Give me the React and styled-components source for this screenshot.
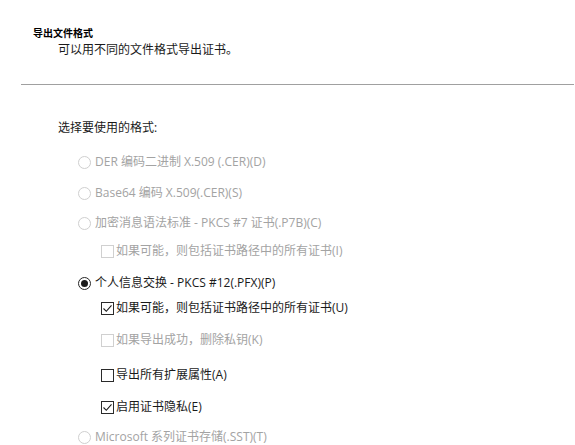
import React from "react";
import styled, { createGlobalStyle } from "styled-components";

const Global = createGlobalStyle`
  html, body { margin: 0; padding: 0; background: #fff; }
  body { font-family: "Open Sans", "Noto Sans CJK SC", "Noto Sans", sans-serif; }
`;

const Page = styled.div`
  width: 575px;
  height: 445px;
  overflow: hidden;
  background: #fff;
  display: flex;
  flex-direction: column;
`;

const Title = styled.div`
  margin: 26px 0 0 33px;
  font-family: "Noto Sans CJK SC", sans-serif;
  font-size: 10px;
  line-height: 13px;
  font-weight: 700;
  color: #000;
`;

const Subtitle = styled.div`
  margin: 3px 0 0 58px;
  font-size: 12px;
  line-height: 16px;
  color: #1a1a1a;
`;

const Divider = styled.div`
  margin: 26px 0 0 21px;
  height: 1px;
  width: 553px;
  background: #a0a0a0;
`;

const Prompt = styled.div`
  margin: 35px 0 0 58px;
  font-size: 12px;
  line-height: 16px;
  color: #1a1a1a;
`;

const Options = styled.div`
  display: flex;
  flex-direction: column;
`;

const Row = styled.div`
  display: flex;
  align-items: center;
  height: 16px;
  margin-top: ${(p) => p.$mt}px;
  margin-left: ${(p) => (p.$sub ? 101 : 78)}px;
  gap: ${(p) => (p.$sub ? 2 : 4)}px;
  font-size: 12px;
  line-height: 16px;
  white-space: nowrap;
  color: ${(p) => (p.$disabled ? "#a3a3a3" : "#1a1a1a")};
`;

const RadioCircle = styled.span`
  box-sizing: border-box;
  width: 13px;
  height: 13px;
  border-radius: 50%;
  border: 1px solid ${(p) => (p.$disabled ? "#cfcfcf" : "#262626")};
  display: flex;
  align-items: center;
  justify-content: center;
  flex: none;
  &::after {
    content: "";
    display: ${(p) => (p.$checked ? "block" : "none")};
    width: 7px;
    height: 7px;
    border-radius: 50%;
    background: #1a1a1a;
  }
`;

const Box = styled.span`
  box-sizing: border-box;
  width: 13px;
  height: 13px;
  border: 1px solid ${(p) => (p.$disabled ? "#d0d0d0" : "#2a2a2a")};
  background: #fff;
  display: flex;
  align-items: center;
  justify-content: center;
  flex: none;
`;

const Radio = ({ label, checked, disabled, mt }) => (
  <Row $mt={mt} $disabled={disabled}>
    <RadioCircle $checked={checked} $disabled={disabled} />
    <span>{label}</span>
  </Row>
);

const Check = ({ label, checked, disabled, mt }) => (
  <Row $mt={mt} $sub $disabled={disabled}>
    <Box $disabled={disabled}>
      {checked && (
        <svg width="11" height="11" viewBox="0 0 11 11">
          <polyline points="1.5,5.5 4.3,8.3 9.5,2.3" fill="none" stroke="#1a1a1a" strokeWidth="1.1" />
        </svg>
      )}
    </Box>
    <span>{label}</span>
  </Row>
);

export default function App() {
  return (
    <Page>
      <Global />
      <Title>导出文件格式</Title>
      <Subtitle>可以用不同的文件格式导出证书。</Subtitle>
      <Divider />
      <Prompt>选择要使用的格式:</Prompt>
      <Options>
        <Radio mt={18} disabled label="DER 编码二进制 X.509 (.CER)(D)" />
        <Radio mt={15} disabled label="Base64 编码 X.509(.CER)(S)" />
        <Radio mt={14} disabled label="加密消息语法标准 - PKCS #7 证书(.P7B)(C)" />
        <Check mt={12} disabled label="如果可能，则包括证书路径中的所有证书(I)" />
        <Radio mt={16} checked label="个人信息交换 - PKCS #12(.PFX)(P)" />
        <Check mt={9} checked label="如果可能，则包括证书路径中的所有证书(U)" />
        <Check mt={16} disabled label="如果导出成功，删除私钥(K)" />
        <Check mt={19} label="导出所有扩展属性(A)" />
        <Check mt={16} checked label="启用证书隐私(E)" />
        <Radio mt={14} disabled label="Microsoft 系列证书存储(.SST)(T)" />
      </Options>
    </Page>
  );
}
